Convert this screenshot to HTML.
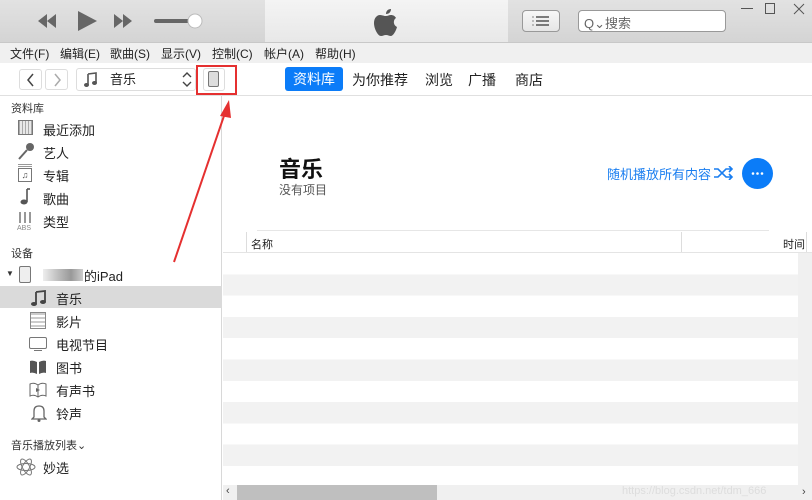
<!DOCTYPE html>
<html><head><meta charset="utf-8"><style>
*{margin:0;padding:0;box-sizing:border-box}
body{width:812px;height:500px;overflow:hidden;background:#fff;font-family:"Liberation Sans","Noto Sans CJK SC",sans-serif;color:#222;position:relative}
.a{position:absolute}
.top{left:0;top:0;width:812px;height:43px;background:linear-gradient(#e2e2e2,#d4d4d4);border-bottom:1px solid #c8c8c8}
.mid{left:265px;top:0;width:243px;height:42px;background:linear-gradient(#f4f4f4,#e8e8e8)}
.menu{left:0;top:43px;width:812px;height:20px;background:#f0f0f0;font-size:12px}
.menu span{position:absolute;top:2px}
.tb{left:0;top:63px;width:812px;height:33px;background:#fff;border-bottom:1px solid #e0e0e0}
.side{left:0;top:96px;width:222px;height:404px;border-right:1px solid #d8d8d8}
.sh{font-size:11px;color:#333}
.it{font-size:13px;color:#222}
svg.i{position:absolute}
</style></head><body>
<div class="a top"></div><div class="a mid"></div>
<svg class="a" style="left:36px;top:10px" width="170" height="24">
<path d="M2 11L11 4V18Z M11 11L20 4V18Z" fill="#666"/>
<path d="M42 1L61 11L42 21Z" fill="#666"/>
<path d="M78 4L87 11L78 18Z M87 4L96 11L87 18Z" fill="#666"/>
<rect x="118" y="9" width="42" height="4" rx="2" fill="#666"/>
<circle cx="159" cy="11" r="7" fill="#fff" stroke="#bbb"/>
</svg>
<svg class="a" style="left:374px;top:8px" width="26" height="30" viewBox="0 0 26 30">
<path d="M17 1c0 3-2 5-5 5 0-3 2-5 5-5z M12 8c2 0 3-1 5-1 2 0 4 1 5 3-3 2-3 7 1 9-1 4-4 9-6 9-2 0-3-1-5-1s-3 1-5 1C4 28 0 21 0 15c0-5 3-8 6-8 2 0 4 1 6 1z" fill="#555"/>
</svg>
<div class="a" style="left:522px;top:10px;width:38px;height:22px;border:1px solid #999;border-radius:4px;background:linear-gradient(#f7f7f7,#e6e6e6)"></div>
<svg class="a" style="left:532px;top:15px" width="20" height="13"><path d="M4 2H17M4 6H17M4 10H17" stroke="#555" stroke-width="1.5"/><path d="M0 2h2M0 6h2M0 10h2" stroke="#888"/></svg>
<div class="a" style="left:578px;top:10px;width:148px;height:22px;border:1px solid #999;border-radius:4px;background:#fff;font-size:13px;color:#666;padding:2px 0 0 5px">Q⌄搜索</div>
<div class="a" style="left:741px;top:8px;width:12px;height:1px;background:#555"></div>
<div class="a" style="left:765px;top:3px;width:10px;height:11px;border:1px solid #555"></div>
<svg class="a" style="left:793px;top:3px" width="12" height="12"><path d="M1 1L11 11M11 1L1 11" stroke="#555"/></svg>
<div class="a menu"><span style="left:10px">文件(F)</span><span style="left:60px">编辑(E)</span><span style="left:110px">歌曲(S)</span><span style="left:161px">显示(V)</span><span style="left:212px">控制(C)</span><span style="left:264px">帐户(A)</span><span style="left:315px">帮助(H)</span></div>
<div class="a tb"></div>
<div class="a" style="left:19px;top:69px;width:23px;height:21px;border:1px solid #ddd;border-radius:3px"></div>
<svg class="a" style="left:26px;top:73px" width="10" height="14"><path d="M7 1L2 7L7 13" stroke="#444" stroke-width="1.5" fill="none"/></svg>
<div class="a" style="left:45px;top:69px;width:23px;height:21px;border:1px solid #ddd;border-radius:3px"></div>
<svg class="a" style="left:53px;top:73px" width="10" height="14"><path d="M2 1L7 7L2 13" stroke="#aaa" stroke-width="1.5" fill="none"/></svg>
<div class="a" style="left:76px;top:68px;width:120px;height:23px;border:1px solid #ddd;border-radius:3px;font-size:13px;line-height:21px"><span style="position:absolute;left:33px">音乐</span></div>
<svg class="a" style="left:84px;top:72px" width="14" height="15"><path d="M4 2L12 1V11M4 2V13" stroke="#555" stroke-width="1.6" fill="none"/><ellipse cx="2.5" cy="13" rx="2.5" ry="2" fill="#555"/><ellipse cx="10.5" cy="11" rx="2.5" ry="2" fill="#555"/></svg>
<svg class="a" style="left:182px;top:72px" width="10" height="15"><path d="M1 5L5 1L9 5M1 10L5 14L9 10" stroke="#444" stroke-width="1.4" fill="none"/></svg>
<div class="a" style="left:203px;top:68px;width:22px;height:23px;border:1px solid #ddd;border-radius:3px"></div>
<div class="a" style="left:208px;top:71px;width:11px;height:16px;border:1.5px solid #777;border-radius:2px;background:#ddd"></div>
<div class="a" style="left:196px;top:65px;width:41px;height:30px;border:2px solid #e53030"></div>
<div class="a" style="left:285px;top:67px;width:58px;height:24px;background:#0b7cf8;color:#fff;font-size:14px;border-radius:3px;text-align:center;line-height:24px">资料库</div>
<div class="a" style="left:352px;top:70px;font-size:14px">为你推荐</div>
<div class="a" style="left:425px;top:70px;font-size:14px">浏览</div>
<div class="a" style="left:468px;top:70px;font-size:14px">广播</div>
<div class="a" style="left:515px;top:70px;font-size:14px">商店</div>
<div class="a side"></div>
<div class="a sh" style="left:11px;top:100px">资料库</div>
<div class="a" style="left:18px;top:120px;width:15px;height:15px;border:1px solid #777;background:repeating-linear-gradient(90deg,#aaa 0 1px,#e8e8e8 1px 3px)"></div><div class="a it" style="left:43px;top:120px">最近添加</div>
<svg class="i" style="left:17px;top:142px" width="18" height="18"><circle cx="13" cy="5" r="4" fill="#666"/><path d="M10 8L2 17" stroke="#666" stroke-width="2"/></svg><div class="a it" style="left:43px;top:143px">艺人</div>
<div class="a" style="left:18px;top:164px;width:14px;height:3px;border-top:1px solid #999;border-bottom:1px solid #999"></div>
<div class="a" style="left:18px;top:168px;width:14px;height:14px;border:1px solid #777;font-size:9px;text-align:center;color:#555;line-height:12px">♫</div><div class="a it" style="left:43px;top:166px">专辑</div>
<svg class="i" style="left:19px;top:188px" width="12" height="18"><path d="M8 1V14" stroke="#555" stroke-width="1.6"/><path d="M8 1h3" stroke="#555" stroke-width="1.6"/><ellipse cx="5" cy="14" rx="3.5" ry="2.5" fill="#555"/></svg><div class="a it" style="left:43px;top:189px">歌曲</div>
<svg class="i" style="left:16px;top:211px" width="20" height="20"><path d="M4 1V12M9 1V12M14 1V12" stroke="#777" stroke-width="1.5"/><text x="1" y="19" font-size="7" fill="#888" font-family="Liberation Sans">ABS</text></svg><div class="a it" style="left:43px;top:212px">类型</div>
<div class="a sh" style="left:11px;top:245px">设备</div>
<div class="a" style="left:6px;top:269px;font-size:8px;color:#333">▼</div>
<div class="a" style="left:19px;top:266px;width:12px;height:17px;border:1.5px solid #777;border-radius:2px;background:#eee"></div>
<div class="a" style="left:43px;top:269px;width:40px;height:12px;background:linear-gradient(90deg,#eee,#bbb 40%,#999 70%,#ccc)"></div>
<div class="a it" style="left:84px;top:266px">的iPad</div>
<div class="a" style="left:0;top:286px;width:222px;height:22px;background:#dadada"></div>
<svg class="i" style="left:31px;top:290px" width="16" height="16"><path d="M5 2L14 1V12M5 2V14" stroke="#444" stroke-width="1.8" fill="none"/><ellipse cx="3" cy="14" rx="3" ry="2" fill="#444"/><ellipse cx="12" cy="12" rx="3" ry="2" fill="#444"/></svg><div class="a it" style="left:56px;top:289px">音乐</div>
<div class="a" style="left:30px;top:312px;width:16px;height:17px;border:1px solid #888;background:repeating-linear-gradient(#ccc 0 2px,#fff 2px 4px)"></div><div class="a it" style="left:56px;top:312px">影片</div>
<div class="a" style="left:29px;top:337px;width:18px;height:12px;border:1.5px solid #777;border-radius:2px"></div><div class="a" style="left:34px;top:350px;width:8px;height:1px;background:#777"></div><div class="a it" style="left:56px;top:335px">电视节目</div>
<svg class="i" style="left:29px;top:360px" width="18" height="15"><path d="M1 1Q4 0 8 2V14Q4 12 1 13Z M17 1Q14 0 10 2V14Q14 12 17 13Z" fill="#555"/></svg><div class="a it" style="left:56px;top:358px">图书</div>
<svg class="i" style="left:29px;top:382px" width="18" height="17"><path d="M1 2Q5 0 9 3Q13 0 17 2V14Q13 12 9 15Q5 12 1 14Z M9 3V15" stroke="#666" fill="none"/><path d="M7 6L11 8L7 10Z" fill="#666"/></svg><div class="a it" style="left:56px;top:381px">有声书</div>
<svg class="i" style="left:31px;top:404px" width="16" height="18"><path d="M3 13V7Q3 2 8 2Q13 2 13 7V13L15 15H1Z" stroke="#666" fill="none" stroke-width="1.3"/><circle cx="8" cy="16.5" r="1.5" fill="#666"/></svg><div class="a it" style="left:56px;top:404px">铃声</div>
<div class="a sh" style="left:11px;top:437px">音乐播放列表⌄</div>
<svg class="i" style="left:16px;top:458px" width="20" height="18"><ellipse cx="10" cy="9" rx="9" ry="3.5" stroke="#777" fill="none"/><ellipse cx="10" cy="9" rx="9" ry="3.5" stroke="#777" fill="none" transform="rotate(60 10 9)"/><ellipse cx="10" cy="9" rx="9" ry="3.5" stroke="#777" fill="none" transform="rotate(120 10 9)"/></svg><div class="a it" style="left:43px;top:458px">妙选</div>
<div class="a" style="left:279px;top:152px;font-size:22px;font-weight:bold;color:#111">音乐</div>
<div class="a" style="left:279px;top:181px;font-size:12px;color:#555">没有项目</div>
<div class="a" style="left:607px;top:164px;font-size:13px;color:#1a7ef0">随机播放所有内容</div>
<svg class="a" style="left:714px;top:166px" width="20" height="14"><path d="M0 3h4l8 8h6M0 11h4l8-8h6M15 0l3 3-3 3M15 8l3 3-3 3" stroke="#1a7ef0" stroke-width="1.6" fill="none"/></svg>
<div class="a" style="left:742px;top:158px;width:31px;height:31px;border-radius:50%;background:#0b7cf8"></div>
<svg class="a" style="left:742px;top:158px" width="31" height="31"><circle cx="11" cy="15.5" r="1.3" fill="#fff"/><circle cx="15.5" cy="15.5" r="1.3" fill="#fff"/><circle cx="20" cy="15.5" r="1.3" fill="#fff"/></svg>
<div class="a" style="left:257px;top:230px;width:512px;height:1px;background:#e6e6e6"></div>
<div class="a" style="left:246px;top:232px;width:1px;height:20px;background:#ddd"></div>
<div class="a" style="left:681px;top:232px;width:1px;height:20px;background:#ddd"></div>
<div class="a" style="left:806px;top:232px;width:1px;height:20px;background:#ddd"></div>
<div class="a" style="left:251px;top:236px;font-size:11px">名称</div>
<div class="a" style="left:783px;top:236px;font-size:11px">时间</div>
<div class="a" style="left:223px;top:252px;width:589px;height:1px;background:#e4e4e4"></div>
<div class="a" style="left:223px;top:253px;width:575px;height:232px;background:repeating-linear-gradient(#fff 0 21.3px,#f2f2f2 21.3px 42.6px)"></div>
<div class="a" style="left:798px;top:253px;width:14px;height:247px;background:#f0f0f0"></div>
<div class="a" style="left:223px;top:485px;width:589px;height:15px;background:#f0f0f0"></div>
<div class="a" style="left:237px;top:485px;width:200px;height:15px;background:#bfbfbf"></div>
<div class="a" style="left:226px;top:485px;font-size:11px;color:#444">‹</div>
<div class="a" style="left:802px;top:486px;font-size:11px;color:#444">›</div>
<div class="a" style="left:622px;top:485px;font-size:11px;color:#ddd">https://blog.csdn.net/tdm_666</div>
<svg class="a" style="left:0;top:0" width="812" height="500"><path d="M174 262L226 110" stroke="#e53030" stroke-width="2"/><path d="M229 100L220 116L231 118Z" fill="#e53030"/></svg>
</body></html>
